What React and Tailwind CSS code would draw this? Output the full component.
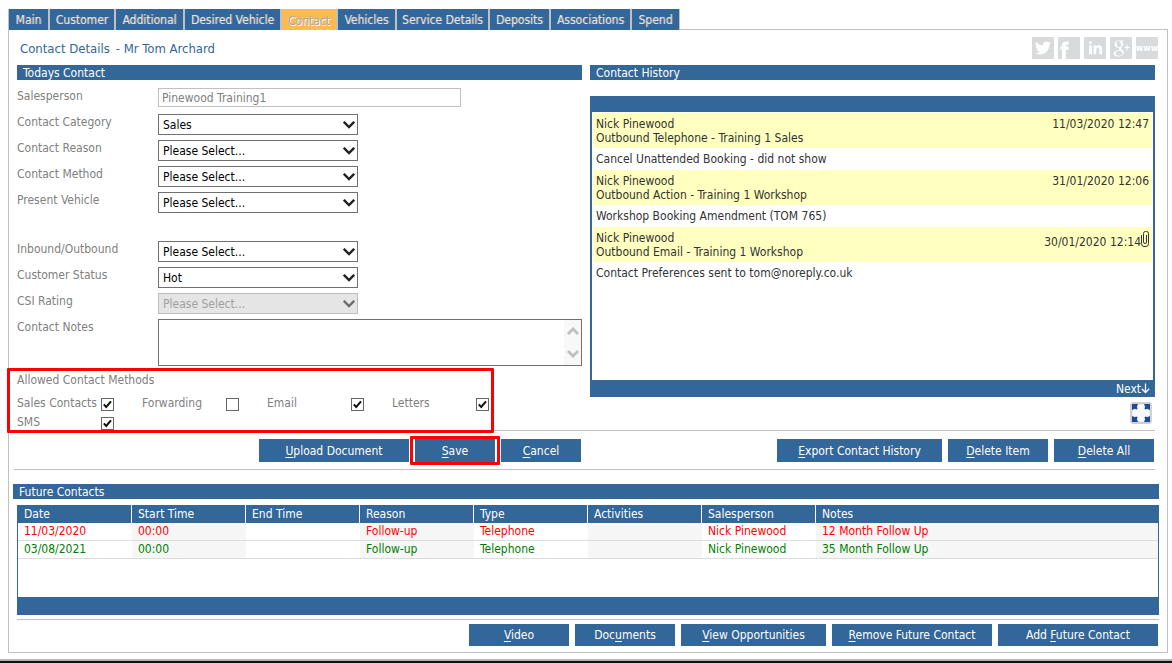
import React from 'react';
import { FaTwitter, FaLinkedinIn } from 'react-icons/fa';
import { TiSocialGooglePlus } from 'react-icons/ti';

const tabs = [
  { label: 'Main', width: 'w-[41px]' },
  { label: 'Customer', width: 'w-[66px]' },
  { label: 'Additional', width: 'w-[69px]' },
  { label: 'Desired Vehicle', width: 'w-[97px]' },
  { label: 'Contact', width: 'w-14', active: true },
  { label: 'Vehicles', width: 'w-[59px]' },
  { label: 'Service Details', width: 'w-[93px]' },
  { label: 'Deposits', width: 'w-[61px]' },
  { label: 'Associations', width: 'w-[81px]' },
  { label: 'Spend', width: 'w-[48px]' },
];

const history = [
  { who: 'Nick Pinewood', what: 'Outbound Telephone - Training 1 Sales', when: '11/03/2020 12:47', note: 'Cancel Unattended Booking - did not show' },
  { who: 'Nick Pinewood', what: 'Outbound Action - Training 1 Workshop', when: '31/01/2020 12:06', note: 'Workshop Booking Amendment (TOM 765)' },
  { who: 'Nick Pinewood', what: 'Outbound Email - Training 1 Workshop', when: '30/01/2020 12:14', note: 'Contact Preferences sent to tom@noreply.co.uk', attachment: true },
];

const columns = ['Date', 'Start Time', 'End Time', 'Reason', 'Type', 'Activities', 'Salesperson', 'Notes'];

const futureContacts = [
  { color: 'text-[#ff0000]', cells: ['11/03/2020', '00:00', '', 'Follow-up', 'Telephone', '', 'Nick Pinewood', '12 Month Follow Up'] },
  { color: 'text-[#008000]', cells: ['03/08/2021', '00:00', '', 'Follow-up', 'Telephone', '', 'Nick Pinewood', '35 Month Follow Up'] },
];

function SectionBar({ children }) {
  return <h2 className="h-[15px] bg-[#336699] px-1.5 leading-4 text-white">{children}</h2>;
}

function Rule({ className }) {
  return <hr className={`border-0 border-t border-[#c0c0c0] ${className}`} />;
}

function ActionButton({ before = '', accessKey, after, className }) {
  return (
    <button type="button" className={`bg-[#336699] text-center text-white ${className}`}>
      {before}
      <span className="underline underline-offset-2">{accessKey}</span>
      {after}
    </button>
  );
}

function FieldRow({ id, label, children }) {
  return (
    <div className="flex min-h-[26px] items-start">
      <label htmlFor={id} className="w-[141px] shrink-0 leading-4 text-[#808080]">{label}</label>
      {children}
    </div>
  );
}

function SelectRow({ id, label, value, disabled = false }) {
  return (
    <FieldRow id={id} label={label}>
      <div className="grid w-[200px]">
        <select
          id={id}
          disabled={disabled}
          defaultValue={value}
          className="col-start-1 row-start-1 h-[21px] w-full appearance-none border border-[#707070] bg-white px-1 text-black opacity-100 disabled:border-[#bdbdbd] disabled:bg-[#e5e5e5] disabled:text-[#a0a0a0]"
        >
          <option>{value}</option>
        </select>
        <svg
          viewBox="0 0 12 8"
          className={`pointer-events-none col-start-1 row-start-1 mr-[3px] h-2 w-3 self-center justify-self-end ${disabled ? 'text-[#6d6d6d]' : 'text-[#222222]'}`}
        >
          <path d="M.8.8 6 6 11.200.8" fill="none" stroke="currentColor" strokeWidth="2.400" />
        </svg>
      </div>
    </FieldRow>
  );
}

function MethodCheckbox({ id, label, checked }) {
  return (
    <div className="flex w-[125px] items-start">
      <label htmlFor={id} className="w-[84px] leading-4 text-[#808080]">{label}</label>
      <span className="mt-[3px] grid size-[13px]">
        <input
          id={id}
          type="checkbox"
          defaultChecked={checked}
          className="peer col-start-1 row-start-1 size-[13px] appearance-none border border-[#666666] bg-white"
        />
        <svg viewBox="0 0 13 13" className="pointer-events-none invisible col-start-1 row-start-1 size-[13px] peer-checked:visible">
          <path d="M2.800 6.400 5.200 9 10 3.400" fill="none" stroke="#111111" strokeWidth="2" />
        </svg>
      </span>
    </div>
  );
}

function SocialLinks() {
  const box = 'flex size-[22px] overflow-hidden bg-[#d8dadc] text-white';
  return (
    <nav aria-label="Social profiles" className="flex gap-1">
      <a href="#twitter" aria-label="Twitter" className={`${box} items-center justify-center`}>
        <FaTwitter size={16} />
      </a>
      <a href="#facebook" aria-label="Facebook" className={box}>
        <svg viewBox="0 0 22 22" className="size-[22px]">
          <path d="M4 22V13H2.500V9.500H4V8.500C4 6 5.500 4.600 8 4.600H10.500V8H9C8 8 7.800 8.300 7.800 9.500H10.500L10.200 13H7.800V22z" fill="currentColor" />
        </svg>
      </a>
      <a href="#linkedin" aria-label="LinkedIn" className={`${box} items-center justify-center`}>
        <FaLinkedinIn size={15} />
      </a>
      <a href="#google" aria-label="Google Plus" className={`${box} items-center justify-center`}>
        <TiSocialGooglePlus size={26} className="shrink-0" />
      </a>
      <a href="#web" aria-label="Website" className={`${box} items-center justify-center text-[9px] font-bold`}>
        www
      </a>
    </nav>
  );
}

function PaperclipIcon() {
  return (
    <svg viewBox="0 0 8 16" className="h-4 w-2" fill="none" stroke="#333333" strokeWidth="1">
      <path d="M.5 4v8.500a2.500 3 0 0 0 2.500 3h2a2.500 3 0 0 0 2.500-3V2.500a2 2 0 0 0-2-2h-1a2 2 0 0 0-2 2V11a1.500 1.500 0 0 0 3 0V4" />
    </svg>
  );
}

function ExpandIcon() {
  return (
    <svg viewBox="0 0 22 22" className="size-[22px]">
      <rect x="1" y="1" width="20" height="20" rx="2" fill="#e6eaf6" stroke="#cfcfcf" strokeWidth="1.800" />
      <path d="M11 3v16M3 11h16" stroke="#ffffff" strokeWidth="5" />
      <rect x="7" y="7" width="8" height="8" fill="#f6f8fd" />
      <g fill="#1f4a8f">
        <path d="M2 2h6L6.800 4.800 7.500 6.500 6.500 7.500 4.800 6.800 2 8z" />
        <path d="M20 2h-6L15.200 4.800 14.500 6.500 15.500 7.500 17.200 6.800 20 8z" />
        <path d="M2 20h6L6.800 17.200 7.500 15.500 6.500 14.500 4.800 15.200 2 14z" />
        <path d="M20 20h-6L15.200 17.200 14.500 15.500 15.500 14.500 17.200 15.200 20 14z" />
      </g>
    </svg>
  );
}

function TodaysContact() {
  return (
    <section>
      <SectionBar>Todays Contact</SectionBar>
      <div className="pt-2">
        <FieldRow id="salesperson" label="Salesperson">
          <input
            id="salesperson"
            readOnly
            defaultValue="Pinewood Training1"
            className="h-[19px] w-[303px] border border-[#c0c0c0] bg-white px-[3px] text-[#808080]"
          />
        </FieldRow>
        <SelectRow id="category" label="Contact Category" value="Sales" />
        <SelectRow id="reason" label="Contact Reason" value="Please Select..." />
        <SelectRow id="method" label="Contact Method" value="Please Select..." />
        <SelectRow id="vehicle" label="Present Vehicle" value="Please Select..." />
      </div>
      <div className="pt-[23px]">
        <SelectRow id="direction" label="Inbound/Outbound" value="Please Select..." />
        <SelectRow id="status" label="Customer Status" value="Hot" />
        <SelectRow id="csi" label="CSI Rating" value="Please Select..." disabled />
        <FieldRow id="notes" label="Contact Notes">
          <div className="flex h-[47px] flex-1 border border-[#707070]">
            <textarea id="notes" className="flex-1 resize-none bg-white px-1" />
            <div className="flex w-[17px] flex-col items-center justify-between bg-[#f8f8f8] py-[7px]">
              <svg viewBox="0 0 12 8" className="h-2 w-3">
                <path d="M1 7 6 2 11 7" fill="none" stroke="#bfbfbf" strokeWidth="2.800" />
              </svg>
              <svg viewBox="0 0 12 8" className="h-2 w-3">
                <path d="M1 1 6 6 11 1" fill="none" stroke="#bfbfbf" strokeWidth="2.800" />
              </svg>
            </div>
          </div>
        </FieldRow>
      </div>
      <div role="group" aria-labelledby="allowed-methods" className="relative mt-1.5">
        <h3 id="allowed-methods" className="leading-4 text-[#808080]">Allowed Contact Methods</h3>
        <div className="mt-[7px] flex w-[500px] flex-wrap gap-y-[3px]">
          <MethodCheckbox id="sales-contacts" label="Sales Contacts" checked />
          <MethodCheckbox id="forwarding" label="Forwarding" checked={false} />
          <MethodCheckbox id="email" label="Email" checked />
          <MethodCheckbox id="letters" label="Letters" checked />
          <MethodCheckbox id="sms" label="SMS" checked />
        </div>
        <div className="pointer-events-none absolute -top-1 -bottom-[3px] -left-[10px] z-10 w-[487px] rounded-[1px] border-3 border-[#ff0000]" />
      </div>
    </section>
  );
}

function ContactHistory() {
  return (
    <section>
      <SectionBar>Contact History</SectionBar>
      <div className="mt-4 flex h-[301px] flex-col border-x-2 border-[#336699] text-[#333333]">
        <div className="h-4 bg-[#336699]" />
        <ul className="flex-1 px-px pt-px">
          {history.map((item) => (
            <li key={item.when}>
              <div className="flex h-[35px] justify-between bg-[#ffffc0] px-[3px] pt-1 leading-[14px]">
                <div>
                  <p>{item.who}</p>
                  <p>{item.what}</p>
                </div>
                {item.attachment ? (
                  <div className="flex items-start">
                    <span className="mt-1">{item.when}</span>
                    <PaperclipIcon />
                  </div>
                ) : (
                  <span>{item.when}</span>
                )}
              </div>
              <p className="px-[3px] leading-[22px]">{item.note}</p>
            </li>
          ))}
        </ul>
        <div className="flex h-[17px] items-center justify-end bg-[#336699] pr-[3px] text-white">
          <a href="#next" className="flex items-center">
            Next
            <svg viewBox="0 0 9 11" className="h-[11px] w-[9px]" fill="none" stroke="currentColor" strokeWidth="1.300">
              <path d="M4.500 0.500V9.500M.8 5.800l3.700 3.700 3.700-3.700" />
            </svg>
          </a>
        </div>
      </div>
      <div className="flex justify-end pt-[5px] pr-[3px]">
        <button type="button" aria-label="Expand contact history">
          <ExpandIcon />
        </button>
      </div>
    </section>
  );
}

function FutureContacts() {
  return (
    <section className="mt-[14px] pr-2 pl-1">
      <SectionBar>Future Contacts</SectionBar>
      <div className="mt-1.5 ml-1">
        <div className="h-[110px] border-x border-b-[18px] border-[#336699]">
          <table className="w-full table-fixed border-separate border-spacing-0 text-left">
            <colgroup>
              {columns.map((name, i) => (
                <col key={name} className={i < 7 ? 'w-[114px]' : 'w-auto'} />
              ))}
            </colgroup>
            <thead>
              <tr className="h-[18px] bg-[#336699] text-white">
                {columns.map((name) => (
                  <th key={name} className="border-r border-white px-1.5 py-0 leading-[18px] font-normal last:border-r-0">{name}</th>
                ))}
              </tr>
            </thead>
            <tbody>
              {futureContacts.map((row) => (
                <tr key={row.cells[0]} className={`h-[18px] ${row.color}`}>
                  {row.cells.map((cell, i) => (
                    <td key={columns[i]} className="border-b border-[#dcdcdc] px-1.5 py-0 leading-[17px] even:bg-[#f6f6f6]">{cell}</td>
                  ))}
                </tr>
              ))}
            </tbody>
          </table>
        </div>
        <Rule className="mt-1" />
        <div className="flex h-[26px] justify-end gap-1.5 pt-1 pr-px">
          <ActionButton accessKey="V" after="ideo" className="w-[100px]" />
          <ActionButton before="Doc" accessKey="u" after="ments" className="w-[100px]" />
          <ActionButton accessKey="V" after="iew Opportunities" className="w-[145px]" />
          <ActionButton accessKey="R" after="emove Future Contact" className="w-[160px]" />
          <ActionButton before="Add " accessKey="F" after="uture Contact" className="w-[160px]" />
        </div>
      </div>
    </section>
  );
}

export default function App() {
  return (
    <div className="bg-white font-['DejaVu_Sans_Condensed','DejaVu_Sans',sans-serif] text-[12px] leading-4 text-black">
      <div className="pt-[9px] pr-1 pl-2">
        <nav className="relative z-10 -mb-px flex w-fit border-l border-[#c0c0c0]">
          {tabs.map((tab) => (
            <a
              key={tab.label}
              href={`#${tab.label}`}
              className={`flex h-[21px] items-center justify-center border-r-2 border-[#c0c0c0] whitespace-nowrap last:border-r ${tab.width} ${
                tab.active
                  ? 'bg-[#f8bb55] pt-0.5 text-[#a8a8a8] [text-shadow:1px_1px_0_#ffffff]'
                  : 'bg-[#336699] pt-px text-[#e8e8e8] [text-shadow:1px_0_0_#808080]'
              }`}
            >
              {tab.label}
            </a>
          ))}
        </nav>
        <main className="border border-[#c0c0c0] pb-1.5">
          <header className="flex h-[35px] items-start justify-between pt-[7px] pr-[9px] pl-[11px]">
            <h1 className="flex gap-1.5 pt-1 text-[13px] leading-4 text-[#336699]">
              <span>Contact Details</span>
              <span>- Mr Tom Archard</span>
            </h1>
            <SocialLinks />
          </header>
          <div className="grid grid-cols-2 gap-2 pr-3 pl-2">
            <TodaysContact />
            <ContactHistory />
          </div>
          <Rule className="mr-3 ml-[5px]" />
          <div className="grid grid-cols-2 gap-2 pt-2 pr-3 pb-[7px] pl-2">
            <div className="flex h-[23px] justify-end gap-1.5 pr-px">
              <ActionButton accessKey="U" after="pload Document" className="w-[150px]" />
              <div className="relative flex">
                <ActionButton accessKey="S" after="ave" className="w-20" />
                <div className="pointer-events-none absolute -inset-x-[5px] -inset-y-[3px] rounded-[1px] border-3 border-[#ff0000]" />
              </div>
              <ActionButton accessKey="C" after="ancel" className="w-20" />
            </div>
            <div className="flex h-[23px] justify-end gap-1.5 pr-px">
              <ActionButton accessKey="E" after="xport Contact History" className="w-[165px]" />
              <ActionButton accessKey="D" after="elete Item" className="w-[100px]" />
              <ActionButton accessKey="D" after="elete All" className="w-[100px]" />
            </div>
          </div>
          <Rule className="mr-3 ml-[5px]" />
          <FutureContacts />
        </main>
      </div>
      <div className="mt-1.5 h-1 border-t-2 border-[#b4b4b4] bg-[#111111]" />
    </div>
  );
}
